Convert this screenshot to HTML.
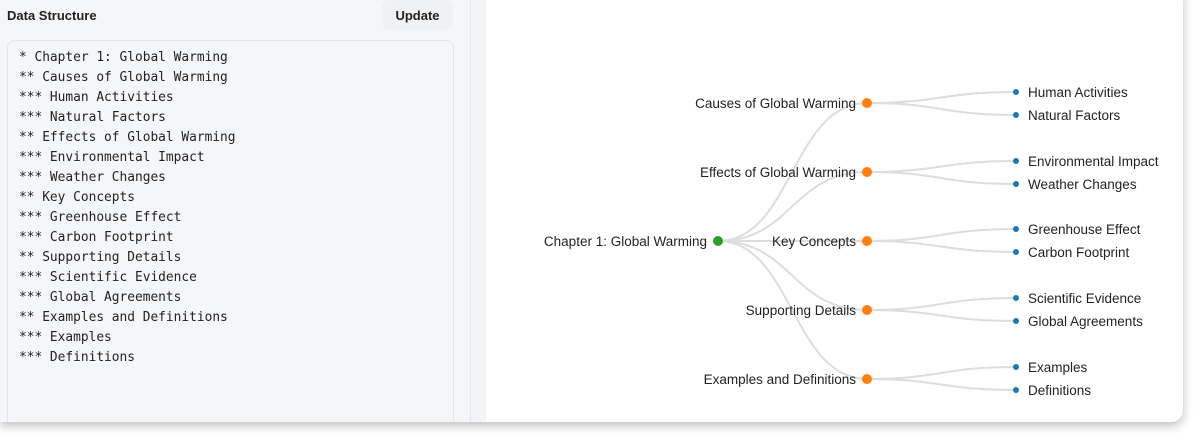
<!DOCTYPE html>
<html><head><style>
body{margin:0;width:1202px;height:446px;background:#fff;font-family:"Liberation Sans",sans-serif;overflow:hidden;position:relative}
.card{position:absolute;left:0;top:-10px;width:1183px;height:432px;border-radius:0 0 12px 0;box-shadow:0 4px 10px rgba(0,0,0,.25);overflow:hidden;background:#fff}
.left{position:absolute;left:0;top:0;width:470px;height:100%;background:#f5f6f8;border-right:1px solid #e6e7ea}
.strip{position:absolute;left:471px;top:0;width:15px;height:100%;background:#f3f4f6}
.title{position:absolute;left:7px;top:18px;font-size:13px;font-weight:bold;color:#222}
.btn{position:absolute;left:382px;top:10px;width:71px;height:30px;border-radius:8px;background:#f0f1f3;font-size:13px;font-weight:bold;color:#222;text-align:center;line-height:31px}
.ta{position:absolute;left:7px;top:50px;width:445px;height:420px;border:1px solid #e3e5e8;border-radius:8px;background:#f5f6f8}
pre{margin:0;position:absolute;left:11px;top:7px;font-family:"DejaVu Sans Mono","Liberation Mono",monospace;font-size:12.85px;line-height:20px;color:#222}
svg{position:absolute;left:0;top:0}
</style></head><body>
<div class="card">
<div class="left">
<div class="title">Data Structure</div>
<div class="btn">Update</div>
<div class="ta"><pre>* Chapter 1: Global Warming
** Causes of Global Warming
*** Human Activities
*** Natural Factors
** Effects of Global Warming
*** Environmental Impact
*** Weather Changes
** Key Concepts
*** Greenhouse Effect
*** Carbon Footprint
** Supporting Details
*** Scientific Evidence
*** Global Agreements
** Examples and Definitions
*** Examples
*** Definitions</pre></div>
</div>
<div class="strip"></div>
</div>
<svg width="1202" height="446" font-size="13.5" font-family="Liberation Sans,sans-serif" fill="#222">
<g fill="none" stroke="#ddd" stroke-width="2">
<path d="M718 241C792 241 792 103 867 103"/><path d="M718 241C792 241 792 172 867 172"/><path d="M718 241H867"/><path d="M718 241C792 241 792 310 867 310"/><path d="M718 241C792 241 792 379 867 379"/>
<path d="M867 103C941 103 941 92 1016 92M867 103C941 103 941 115 1016 115"/>
<path d="M867 172C941 172 941 161 1016 161M867 172C941 172 941 184 1016 184"/>
<path d="M867 241C941 241 941 229 1016 229M867 241C941 241 941 252 1016 252"/>
<path d="M867 310C941 310 941 298 1016 298M867 310C941 310 941 321 1016 321"/>
<path d="M867 379C941 379 941 367 1016 367M867 379C941 379 941 390 1016 390"/>
</g>
<circle cx="718" cy="241" r="5" fill="#2ca02c"/>
<g fill="#ff7f0e"><circle cx="867" cy="103" r="5"/><circle cx="867" cy="172" r="5"/><circle cx="867" cy="241" r="5"/><circle cx="867" cy="310" r="5"/><circle cx="867" cy="379" r="5"/></g>
<g fill="#1f77b4"><circle cx="1016" cy="92" r="3"/><circle cx="1016" cy="115" r="3"/><circle cx="1016" cy="161" r="3"/><circle cx="1016" cy="184" r="3"/><circle cx="1016" cy="229" r="3"/><circle cx="1016" cy="252" r="3"/><circle cx="1016" cy="298" r="3"/><circle cx="1016" cy="321" r="3"/><circle cx="1016" cy="367" r="3"/><circle cx="1016" cy="390" r="3"/></g>
<g text-anchor="end"><text x="707" y="246">Chapter 1: Global Warming</text>
<text x="856" y="108">Causes of Global Warming</text><text x="856" y="177">Effects of Global Warming</text><text x="856" y="246">Key Concepts</text><text x="856" y="315">Supporting Details</text><text x="856" y="384">Examples and Definitions</text></g>
<g><text x="1028" y="97">Human Activities</text><text x="1028" y="120">Natural Factors</text><text x="1028" y="166">Environmental Impact</text><text x="1028" y="189">Weather Changes</text><text x="1028" y="234">Greenhouse Effect</text><text x="1028" y="257">Carbon Footprint</text><text x="1028" y="303">Scientific Evidence</text><text x="1028" y="326">Global Agreements</text><text x="1028" y="372">Examples</text><text x="1028" y="395">Definitions</text></g>
</svg>
</body></html>
